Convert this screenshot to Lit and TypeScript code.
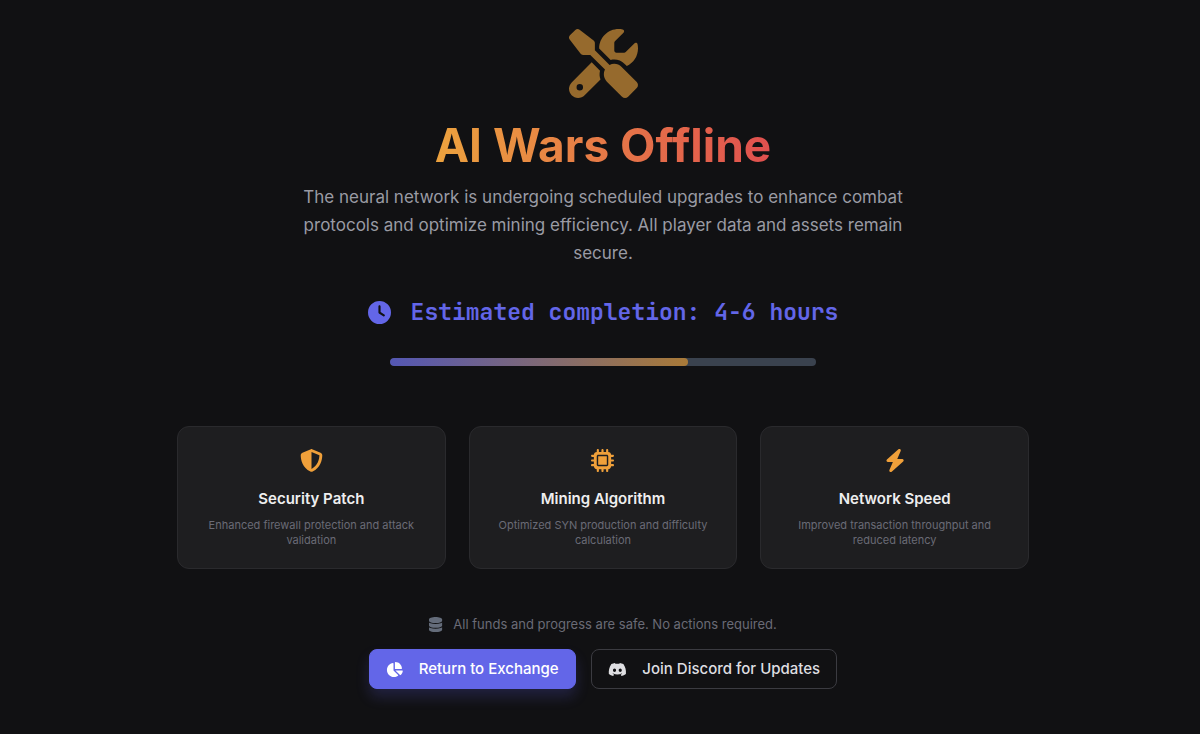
import { LitElement, html, css, svg } from "lit";
import { customElement, property } from "lit/decorators.js";

const ICONS: Record<string, { width: number; path: string }> = {
  tools: {
    width: 512,
    path: "M78.6 5C69.1-2.4 55.6-1.5 47 7L7 47c-8.5 8.5-9.4 22-2.1 31.6l80 104c4.5 5.9 11.6 9.4 19 9.4h54.1l109 109c-14.7 29-10 65.4 14.3 89.6l112 112c12.5 12.5 32.8 12.5 45.3 0l64-64c12.5-12.5 12.5-32.8 0-45.3l-112-112c-24.2-24.2-60.6-29-89.6-14.3l-109-109V104c0-7.5-3.5-14.5-9.4-19L78.6 5zM19.9 396.1C7.2 408.8 0 426.1 0 444.1C0 481.6 30.4 512 67.9 512c18 0 35.3-7.2 48-19.9L233.7 374.3c-7.8-20.9-9-43.6-3.6-65.1l-61.7-61.7L19.9 396.1zM512 144c0-10.5-1.1-20.7-3.2-30.5c-2.4-11.2-16.1-14.1-24.2-6l-63.9 63.9c-3 3-7.1 4.7-11.3 4.7H352c-8.8 0-16-7.2-16-16V102.6c0-4.2 1.7-8.3 4.7-11.3l63.9-63.9c8.1-8.1 5.2-21.8-6-24.2C388.7 1.1 378.5 0 368 0C288.5 0 224 64.5 224 144l0 .8 85.3 85.3c36-9.1 75.8 .5 104 28.7L429 274.5c49-23 83-72.8 83-130.5zM56 432a24 24 0 1 1 48 0 24 24 0 1 1 -48 0z",
  },
  clock: {
    width: 512,
    path: "M256 0a256 256 0 1 1 0 512A256 256 0 1 1 256 0zM232 120V256c0 8 4 15.5 10.7 20l96 64c11 7.4 25.9 4.4 33.3-6.7s4.4-25.9-6.7-33.3L280 243.2V120c0-13.3-10.7-24-24-24s-24 10.7-24 24z",
  },
  shield: {
    width: 512,
    path: "M256 0c4.6 0 9.2 1 13.4 2.9L457.7 82.8c22 9.3 38.4 31 38.3 57.2c-.5 99.2-41.3 280.7-213.6 363.2c-16.7 8-36.1 8-52.8 0C57.3 420.7 16.5 239.2 16 140c-.1-26.2 16.3-47.9 38.3-57.2L242.7 2.9C246.8 1 251.4 0 256 0zm0 66.8V444.8C394 378 431.1 230.1 432 141.4L256 66.8l0 0z",
  },
  chip: {
    width: 512,
    path: "M176 24c0-13.3-10.7-24-24-24s-24 10.7-24 24V64c-35.3 0-64 28.7-64 64H24c-13.3 0-24 10.7-24 24s10.7 24 24 24H64v56H24c-13.3 0-24 10.7-24 24s10.7 24 24 24H64v56H24c-13.3 0-24 10.7-24 24s10.7 24 24 24H64c0 35.3 28.7 64 64 64v40c0 13.3 10.7 24 24 24s24-10.7 24-24V448h56v40c0 13.3 10.7 24 24 24s24-10.7 24-24V448h56v40c0 13.3 10.7 24 24 24s24-10.7 24-24V448c35.3 0 64-28.7 64-64h40c13.3 0 24-10.7 24-24s-10.7-24-24-24H448V280h40c13.3 0 24-10.7 24-24s-10.7-24-24-24H448V176h40c13.3 0 24-10.7 24-24s-10.7-24-24-24H448c0-35.3-28.7-64-64-64V24c0-13.3-10.7-24-24-24s-24 10.7-24 24V64H280V24c0-13.3-10.7-24-24-24s-24 10.7-24 24V64H176V24zM160 128H352c17.7 0 32 14.3 32 32V352c0 17.7-14.3 32-32 32H160c-17.7 0-32-14.3-32-32V160c0-17.7 14.3-32 32-32zm192 32H160V352H352V160z",
  },
  bolt: {
    width: 448,
    path: "M349.4 44.6c5.9-13.7 1.5-29.7-10.6-38.5s-28.6-8-39.9 1.8l-256 224c-10 8.8-13.6 22.9-8.9 35.3S50.7 288 64 288H175.5L98.6 467.4c-5.9 13.7-1.5 29.7 10.6 38.5s28.6 8 39.9-1.8l256-224c10-8.8 13.6-22.9 8.9-35.3s-16.6-20.7-30-20.7H272.5L349.4 44.6z",
  },
  database: {
    width: 448,
    path: "M448 80v48c0 44.2-100.3 80-224 80S0 172.2 0 128V80C0 35.8 100.3 0 224 0S448 35.8 448 80zM393.2 214.7c20.8-7.4 39.9-16.9 54.8-28.6V288c0 44.2-100.3 80-224 80S0 332.2 0 288V186.1c14.9 11.8 34 21.2 54.8 28.6C99.7 230.7 159.5 240 224 240s124.3-9.3 169.2-25.3zM0 346.1c14.9 11.8 34 21.2 54.8 28.6C99.7 390.7 159.5 400 224 400s124.3-9.3 169.2-25.3c20.8-7.4 39.9-16.9 54.8-28.6V432c0 44.2-100.3 80-224 80S0 476.2 0 432V346.1z",
  },
  pie: {
    width: 576,
    path: "M304 240V16.6c0-9 7-16.6 16-16.6C443.7 0 544 100.3 544 224c0 9-7.6 16-16.6 16H304zM32 272C32 150.7 122.1 50.3 239 34.3c9.2-1.3 17 6.1 17 15.4V288L412.5 444.5c6.7 6.7 6.2 17.7-1.5 23.1C371.8 495.6 323.8 512 272 512C139.5 512 32 404.6 32 272zm526.4 16c9.3 0 16.6 7.8 15.4 17c-7.7 55.9-34.6 105.6-73.9 142.3c-6 5.6-15.4 5.2-21.2-.7L320 288H558.4z",
  },
  discord: {
    width: 640,
    path: "M524.531,69.836a1.5,1.5,0,0,0-.764-.7A485.065,485.065,0,0,0,404.081,32.03a1.816,1.816,0,0,0-1.923.91,337.461,337.461,0,0,0-14.9,30.6,447.848,447.848,0,0,0-134.426,0,309.541,309.541,0,0,0-15.135-30.6,1.89,1.89,0,0,0-1.924-.91A483.689,483.689,0,0,0,116.085,69.137a1.712,1.712,0,0,0-.788.676C39.068,183.651,18.186,294.69,28.43,404.354a2.016,2.016,0,0,0,.765,1.375A487.666,487.666,0,0,0,176.02,479.918a1.9,1.9,0,0,0,2.063-.676A348.2,348.2,0,0,0,208.12,430.4a1.86,1.86,0,0,0-1.019-2.588,321.173,321.173,0,0,1-45.868-21.853,1.885,1.885,0,0,1-.185-3.126c3.082-2.309,6.166-4.711,9.109-7.137a1.819,1.819,0,0,1,1.9-.256c96.229,43.917,200.41,43.917,295.5,0a1.812,1.812,0,0,1,1.924.233c2.944,2.426,6.027,4.851,9.132,7.16a1.884,1.884,0,0,1-.162,3.126,301.407,301.407,0,0,1-45.89,21.83,1.875,1.875,0,0,0-1,2.611,391.055,391.055,0,0,0,30.014,48.815,1.864,1.864,0,0,0,2.063.7A486.048,486.048,0,0,0,610.7,405.729a1.882,1.882,0,0,0,.765-1.352C623.729,277.594,590.933,167.465,524.531,69.836ZM222.491,337.58c-28.972,0-52.844-26.587-52.844-59.239S193.056,219.1,222.491,219.1c29.665,0,53.306,26.82,52.843,59.239C275.334,310.993,251.924,337.58,222.491,337.58Zm195.38,0c-28.971,0-52.843-26.587-52.843-59.239S388.437,219.1,417.871,219.1c29.667,0,53.307,26.82,52.844,59.239C470.715,310.993,447.538,337.58,417.871,337.58Z",
  },
};

@customElement("app-icon")
export class AppIcon extends LitElement {
  @property() name = "clock";

  static styles = css`
    :host {
      display: inline-flex;
      flex: none;
      height: 1em;
    }
    .glyph {
      display: block;
      height: 1em;
      fill: currentColor;
      overflow: visible;
    }
  `;

  render() {
    const icon = ICONS[this.name];
    return html`<svg class="glyph" viewBox="0 0 ${icon.width} 512" aria-hidden="true">
      ${svg`<path d=${icon.path}></path>`}
    </svg>`;
  }
}

@customElement("upgrade-card")
export class UpgradeCard extends LitElement {
  @property() icon = "";
  @property() heading = "";
  @property() text = "";

  static styles = css`
    :host {
      display: block;
    }
    .card {
      box-sizing: border-box;
      height: 100%;
      display: flex;
      flex-direction: column;
      align-items: center;
      padding: 22px 22px 20px;
      border: 1px solid #2a2a2d;
      border-radius: 12px;
      background: #1e1e20;
      text-align: center;
    }
    .icon {
      font-size: 23px;
      color: #f0a03a;
    }
    .heading {
      margin: 15px 0 8px;
      font-size: 15px;
      line-height: 23px;
      font-weight: 600;
      color: #eeeeef;
    }
    .text {
      margin: 0;
      font-size: 11px;
      line-height: 15px;
      color: #6a6b76;
    }
  `;

  render() {
    return html`<article class="card">
      <app-icon class="icon" name=${this.icon}></app-icon>
      <h2 class="heading">${this.heading}</h2>
      <p class="text">${this.text}</p>
    </article>`;
  }
}

@customElement("app-root")
export class AppRoot extends LitElement {
  @property({ type: Number }) progress = 70;

  private upgrades = [
    { icon: "shield", heading: "Security Patch", text: "Enhanced firewall protection and attack validation" },
    { icon: "chip", heading: "Mining Algorithm", text: "Optimized SYN production and difficulty calculation" },
    { icon: "bolt", heading: "Network Speed", text: "Improved transaction throughput and reduced latency" },
  ];

  static styles = css`
    :host {
      display: block;
      box-sizing: border-box;
      min-height: 100vh;
      padding: 29px 20px 40px 26px;
      background: #111113;
      color: #e4e4e7;
      font-family: Inter, sans-serif;
    }
    .page {
      display: flex;
      flex-direction: column;
      align-items: center;
      max-width: 852px;
      margin: 0 auto;
      text-align: center;
    }
    .hero {
      font-size: 69px;
      color: #966a2d;
    }
    .title {
      margin: 19px 0 10px;
      font-size: 46px;
      line-height: 56px;
      font-weight: 700;
      color: transparent;
      background: linear-gradient(90deg, #eca23e, #e0504f);
      -webkit-background-clip: text;
      background-clip: text;
    }
    .lead {
      max-width: 636px;
      margin: 0;
      font-size: 17px;
      line-height: 28px;
      color: #9a9ba4;
    }
    .eta {
      display: flex;
      align-items: center;
      gap: 20px;
      margin: 30px 0 31px;
      font-family: "JetBrains Mono", "DejaVu Sans Mono", monospace;
      font-size: 23px;
      line-height: 30px;
      font-weight: 600;
      color: #6366e8;
    }
    .track {
      width: 50%;
      height: 8px;
      border-radius: 4px;
      background: #3a424e;
      overflow: hidden;
    }
    .bar {
      height: 100%;
      border-radius: 4px;
      background: linear-gradient(90deg, #5457b4, #a97a38);
    }
    .cards {
      width: 100%;
      display: grid;
      grid-template-columns: repeat(3, 1fr);
      gap: 23px;
      margin: 60px 0 45px;
    }
    .note {
      display: flex;
      align-items: center;
      gap: 11px;
      margin: 0 0 15px;
      font-size: 13px;
      line-height: 20px;
      color: #6a6b76;
    }
    .store {
      font-size: 15px;
      color: #646c7a;
    }
    .actions {
      display: flex;
      flex-wrap: wrap;
      justify-content: center;
      gap: 15px;
    }
    .button {
      display: flex;
      align-items: center;
      gap: 16px;
      padding: 8px 16px;
      border: 1px solid #6366e8;
      border-radius: 8px;
      font-family: inherit;
      font-size: 15px;
      line-height: 22px;
      font-weight: 500;
      cursor: pointer;
    }
    .primary {
      background: #6366e8;
      color: #ffffff;
      box-shadow: 0 8px 14px rgba(99, 102, 241, 0.2);
    }
    .outline {
      border-color: #3b3b41;
      background: transparent;
      color: #dedee1;
    }
    @media (max-width: 700px) {
      .cards {
        grid-template-columns: 1fr;
      }
    }
  `;

  render() {
    return html`<main class="page">
      <app-icon class="hero" name="tools"></app-icon>
      <h1 class="title">AI Wars Offline</h1>
      <p class="lead">
        The neural network is undergoing scheduled upgrades to enhance combat protocols and optimize mining
        efficiency. All player data and assets remain secure.
      </p>
      <div class="eta">
        <app-icon name="clock"></app-icon>
        <span>Estimated completion: 4-6 hours</span>
      </div>
      <div
        class="track"
        role="progressbar"
        aria-label="Upgrade progress"
        aria-valuemin="0"
        aria-valuemax="100"
        aria-valuenow=${this.progress}
      >
        <div class="bar" style="width: ${this.progress}%"></div>
      </div>
      <section class="cards">
        ${this.upgrades.map(
          (u) => html`<upgrade-card .icon=${u.icon} .heading=${u.heading} .text=${u.text}></upgrade-card>`
        )}
      </section>
      <p class="note">
        <app-icon class="store" name="database"></app-icon>
        <span>All funds and progress are safe. No actions required.</span>
      </p>
      <div class="actions">
        <button class="button primary" type="button"><app-icon name="pie"></app-icon>Return to Exchange</button>
        <button class="button outline" type="button"><app-icon name="discord"></app-icon>Join Discord for Updates</button>
      </div>
    </main>`;
  }
}
